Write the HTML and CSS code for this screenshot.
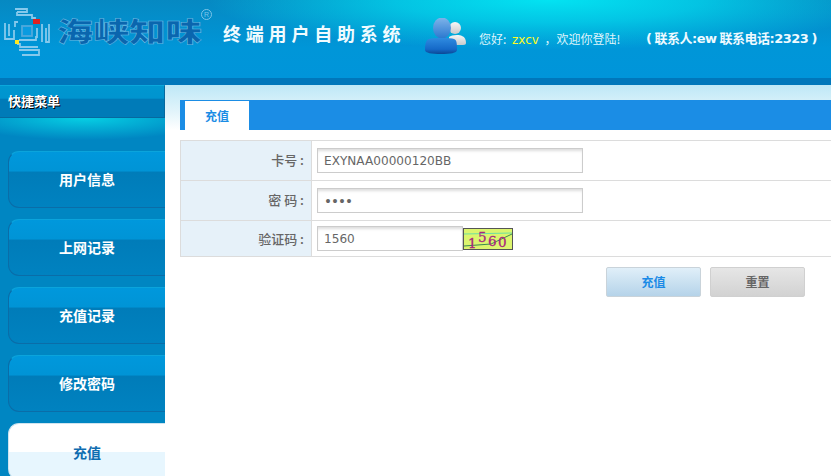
FILE: index.html
```html
<!DOCTYPE html>
<html lang="zh">
<head>
<meta charset="utf-8">
<title>终端用户自助系统</title>
<link rel="stylesheet" href="styles.css">
</head>
<body>
<div class="page">
  <header class="header">
    <div class="logo">
      <svg class="logo-mark" width="52" height="58" viewBox="0 0 52 58" fill="none" stroke="#86c9ec" stroke-width="1.800">
        <path d="M15 9h12v3h-10M17 12v3h15v3h3v2h5"/>
        <path d="M5 23v16h9V30"/>
        <path d="M9 24v11h1"/>
        <path d="M18 22h-3v5"/>
        <path d="M42 24v18"/>
        <path d="M49 24v18h-3V28"/>
        <path d="M37 28v9h-1v3H19"/>
        <path d="M17 44h3v3h18M19 50h20v5H22"/>
        <rect x="22" y="26" width="10" height="10" fill="#0a9be0" stroke="#4fa9dc"/>
        <rect x="33" y="19" width="7" height="5" fill="#e02020" stroke="none"/>
        <rect x="15" y="40" width="4" height="4" fill="#ffe820" stroke="none"/>
      </svg>
      <span class="logo-text">海峡知味</span>
      <span class="logo-reg">R</span>
    </div>
    <h1 class="title">终端用户自助系统</h1>
    <svg class="user-icon" width="41" height="36" viewBox="0 0 41 36">
      <defs>
        <linearGradient id="headGloss" x1="0" y1="0" x2="0" y2="1">
          <stop offset="0" stop-color="#7fb4ea"/>
          <stop offset="1" stop-color="#2a78cf"/>
        </linearGradient>
        <linearGradient id="bodyGloss" x1="0" y1="0" x2="0" y2="1">
          <stop offset="0" stop-color="#2f8be0"/>
          <stop offset="0.700" stop-color="#1569c8"/>
          <stop offset="1" stop-color="#0b4794"/>
        </linearGradient>
        <linearGradient id="greyGloss" x1="0" y1="0" x2="0" y2="1">
          <stop offset="0" stop-color="#f6f6f6"/>
          <stop offset="1" stop-color="#c8cacc"/>
        </linearGradient>
      </defs>
      <circle cx="30" cy="10" r="6" fill="url(#greyGloss)"/>
      <path d="M24 27v-8c2-2 10-3 13-1 3 1 4 4 4 7 0 2-2 2-5 2z" fill="url(#greyGloss)"/>
      <ellipse cx="17" cy="10" rx="9" ry="10.500" fill="url(#headGloss)"/>
      <path d="M0 32c0-6 1-10 4-11 3-1 7-1 13-1s10 0 12 1c3 1 3 5 3 11 0 3-7 4-16 4S0 35 0 32z" fill="url(#bodyGloss)"/>
    </svg>
    <p class="welcome">您好: <span class="welcome-name">zxcv</span> ，欢迎你登陆!</p>
    <p class="contact">( 联系人:ew 联系电话:2323 )</p>
  </header>
  <div class="band"></div>
  <div class="main">
    <aside class="sidebar">
      <div class="side-head">快捷菜单</div>
      <nav class="menu">
        <a class="menu-item">用户信息</a>
        <a class="menu-item">上网记录</a>
        <a class="menu-item">充值记录</a>
        <a class="menu-item">修改密码</a>
        <a class="menu-item menu-item-active">充值</a>
      </nav>
    </aside>
    <main class="content">
      <div class="tabs"><span class="tab">充值</span></div>
      <form class="form">
        <div class="row">
          <label class="label">卡号 :</label>
          <div class="field"><input class="input" type="text" value="EXYNAA00000120BB"></div>
        </div>
        <div class="row">
          <label class="label">密 码 :</label>
          <div class="field"><input class="input input-pass" type="password" value="1560"></div>
        </div>
        <div class="row row-last">
          <label class="label">验证码 :</label>
          <div class="field field-code">
            <input class="input input-code" type="text" value="1560">
            <svg class="captcha" width="50" height="22" viewBox="0 0 50 22">
              <rect x="0.500" y="0.500" width="49" height="21" fill="#dcf56e" stroke="#555"/>
              <path d="M1 6 L49 5" stroke="#6fe0a0" fill="none"/>
              <path d="M1 18 L28 16 L49 6" stroke="#3a8a50" fill="none"/>
              <g class="captcha-digits">
                <text x="5" y="19.500">1</text>
                <text x="15" y="14">5</text>
                <text x="25" y="18">6</text>
                <text x="35" y="19">0</text>
              </g>
            </svg>
          </div>
        </div>
        <div class="actions">
          <button class="btn btn-primary" type="button">充值</button>
          <button class="btn btn-reset" type="button">重置</button>
        </div>
      </form>
    </main>
  </div>
</div>
</body>
</html>
```
FILE: styles.css
```css
* { box-sizing: border-box; }
html, body { margin: 0; padding: 0; height: 100%; overflow: hidden; background: #fff; }
body { font-family: "Noto Sans CJK SC", "DejaVu Sans", sans-serif; font-size: 12px; }
.page { width: 831px; height: 476px; overflow: hidden; display: flex; flex-direction: column; }

.header {
  height: 78px; flex: none; display: flex; align-items: flex-start; color: #fff;
  background:
    radial-gradient(ellipse 340px 50px at 66% 0, #03e3f2 0, rgba(3,220,240,.7) 45%, rgba(0,190,230,0) 100%),
    linear-gradient(180deg, #0689c2 0, #0096d8 62%, #0095da 100%);
}
.logo { width: 215px; flex: none; display: flex; align-items: flex-start; }
.logo-mark { flex: none; }
.logo-text {
  margin: 12px 0 0 5px; width: 144px; flex: none; white-space: nowrap;
  font: 900 27px/38px "Noto Sans CJK SC", sans-serif;
  color: #0a66ae; -webkit-text-stroke: 0.5px #6dbde6; transform: scaleX(1.34); transform-origin: left;
}
.logo-reg {
  margin: 9px 0 0 0; width: 11px; height: 11px; border: 1px solid #7cc4e8; border-radius: 50%; flex: none;
  font: 7px/9px "Liberation Sans", sans-serif; color: #7cc4e8; text-align: center;
}
.title {
  margin: 21px 0 0 8px; width: 202px; flex: none;
  font: 700 18px/25px "Noto Sans CJK SC", sans-serif; letter-spacing: 4.800px; white-space: nowrap; color: #f0fbff;
}
.user-icon { flex: none; margin-top: 18px; }
.welcome { margin: 30px 0 0 13px; width: 166px; flex: none; font: 12px/18px "Noto Sans CJK SC", "DejaVu Sans", sans-serif; color: #dff4fb; white-space: nowrap; }
.welcome-name { color: #fdfb22; font-family: "DejaVu Sans", sans-serif; margin: 0 3px; }
.contact {
  margin: 30px 0 0 1px; font: 700 13px/18px "DejaVu Sans", "Noto Sans CJK SC", sans-serif; color: #eefaff;
  white-space: nowrap; letter-spacing: -0.500px; word-spacing: -1px;
}

.band { height: 7px; flex: none; background: #0077bb; }
.main { flex: 1; display: flex; min-height: 0; }

.sidebar {
  width: 165px; flex: none; display: flex; flex-direction: column; background:
    radial-gradient(ellipse 130px 22px at 85px 33px, #06cfe4 0, rgba(6,190,225,0) 100%), #0086c2;
}
.side-head {
  height: 33px; flex: none; padding: 6px 0 0 8px; color: #fff;
  font: 700 13px/18px "Noto Sans CJK SC", sans-serif; text-shadow: 1px 1px 0 #000;
  border-top: 1px solid #0aa8dc; border-right: 1px solid #06699f; border-bottom: 1px solid #06699f;
  background: linear-gradient(180deg, #0097d0 0, #0094cf 40%, #007bb8 41%, #007bb8 100%);
}
.menu { display: flex; flex-direction: column; gap: 11px; padding: 33px 0 0 8px; }
.menu-item {
  height: 57px; flex: none; display: flex; align-items: center; justify-content: center;
  color: #fff; font: 700 14px/18px "Noto Sans CJK SC", sans-serif; padding-bottom: 2px;
  border-radius: 11px 0 0 11px; border: 1px solid #0a6da8; border-right: 0; border-top-color: #0ba4dc;
  background: linear-gradient(180deg, #0098dc 0, #0094d6 35%, #007cb9 36%, #0082c0 100%);
}
.menu-item-active {
  color: #0e6cb0; border-color: #cfe4ef; padding-bottom: 0;
  background: linear-gradient(180deg, #fff 0, #fff 50%, #e7f6fe 51%, #e7f6fe 100%);
}

.content {
  flex: 1; min-width: 0; padding: 15px 0 0 15px;
  background: linear-gradient(180deg, #bee8f7 0, #e4f5fb 28px, #fff 45px, #fff 100%);
}
.tabs { height: 30px; background: #1b8de5; padding: 1px 0 0 5px; display: flex; }
.tab {
  width: 64px; background: #fff; color: #1b8de5; text-align: center;
  font: 700 12px/29px "Noto Sans CJK SC", sans-serif;
}
.form { margin-top: 10px; width: 670px; }
.row { display: flex; height: 40px; border: 1px solid #dcdcdc; border-bottom: 0; border-right: 0; }
.row-last { height: 37px; border-bottom: 1px solid #dcdcdc; }
.row-last .label { line-height: 36px; }
.label {
  width: 131px; flex: none; background: #e6f1f9; border-right: 1px solid #dcdcdc;
  text-align: right; padding-right: 7px; color: #666; font: 500 13px/38px "Noto Sans CJK SC", sans-serif;
}
.field { flex: 1; padding: 7px 0 0 5px; display: flex; align-items: flex-start; }
.field-code { padding-top: 5px; }
.input {
  width: 266px; height: 25px; border: 1px solid #cccccc; padding: 0 6px; margin: 0; outline: 0;
  color: #666; font: 12.100px "DejaVu Sans", sans-serif; background: #fff;
  box-shadow: inset 0 3px 3px -1px #ddd;
}
.input-pass { letter-spacing: -1px; font-size: 13.500px; }
.input-code { width: 146px; }
.captcha { flex: none; margin-top: 2px; }
.captcha-digits text { font: 400 13.500px "DejaVu Serif", serif; fill: #a8257f; stroke: #a8257f; stroke-width: 0.300px; }
.actions { display: flex; gap: 9px; padding: 10px 0 0 426px; }
.btn {
  width: 95px; height: 30px; border-radius: 2px; border: 1px solid #c9d3da; padding: 0;
  font: 700 12px/28px "Noto Sans CJK SC", sans-serif;
}
.btn-primary { color: #1a8ae6; background: linear-gradient(180deg, #e0eff9, #b5d3e9); }
.btn-reset { color: #666; border-color: #d0d0d0; background: linear-gradient(180deg, #e6e6e6, #d2d2d2); }
```
